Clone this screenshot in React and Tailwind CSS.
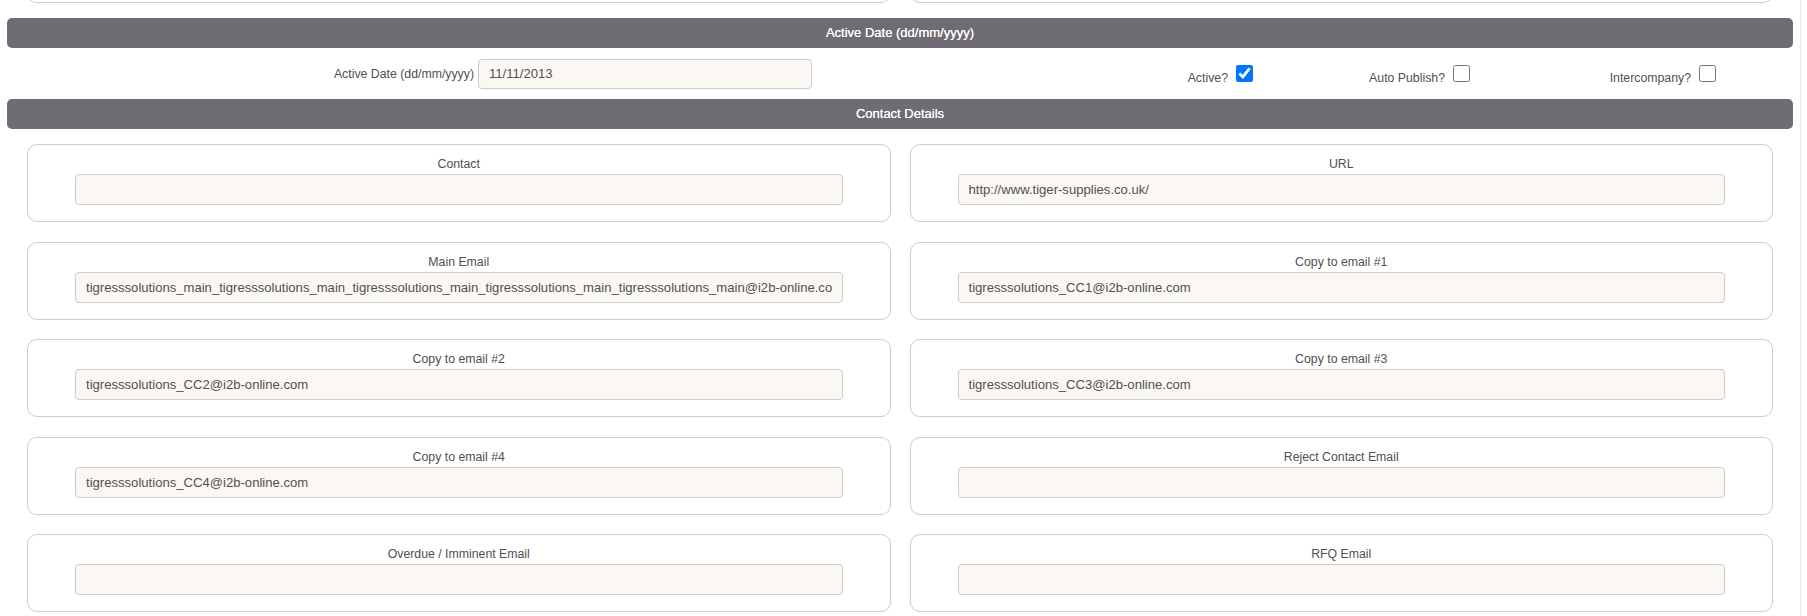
import React from 'react';

const contactFields = [
  { label: 'Contact', value: '' },
  { label: 'URL', value: 'http://www.tiger-supplies.co.uk/' },
  {
    label: 'Main Email',
    value:
      'tigresssolutions_main_tigresssolutions_main_tigresssolutions_main_tigresssolutions_main_tigresssolutions_main@i2b-online.com',
  },
  { label: 'Copy to email #1', value: 'tigresssolutions_CC1@i2b-online.com' },
  { label: 'Copy to email #2', value: 'tigresssolutions_CC2@i2b-online.com' },
  { label: 'Copy to email #3', value: 'tigresssolutions_CC3@i2b-online.com' },
  { label: 'Copy to email #4', value: 'tigresssolutions_CC4@i2b-online.com' },
  { label: 'Reject Contact Email', value: '' },
  { label: 'Overdue / Imminent Email', value: '' },
  { label: 'RFQ Email', value: '' },
];

const SectionBar = ({ title }) => (
  <div className="flex h-[30px] items-center justify-center rounded-[5px] bg-[#706c74] text-[13px] text-white [text-shadow:0_0_0.5px_#fff]">
    {title}
  </div>
);

const CheckField = ({ label, checked, width }) => (
  <div className={`flex items-center justify-end ${width}`}>
    <span className="pt-[8px] text-[12.3px] leading-[16px] text-[#505050]">{label}</span>
    <input
      type="checkbox"
      defaultChecked={checked}
      className="ml-[8px] h-[17px] w-[17px] accent-[#0075ff]"
    />
  </div>
);

const FieldCard = ({ label, value }) => (
  <div className="flex h-[78px] flex-col items-center rounded-[10px] border border-[#cccbd0] px-[47px] pt-[11px]">
    <div className="text-[12.3px] leading-[16px] text-[#505050]">{label}</div>
    <input
      type="text"
      readOnly
      value={value}
      className="mt-[2px] h-[31px] w-full rounded-[4px] border border-[#cccccc] bg-[#fbf8f3] px-[10px] text-[13.1px] text-[#505050] outline-none"
    />
  </div>
);

export default function App() {
  return (
    <div className="h-[616px] w-[1807px] overflow-hidden bg-white font-['Liberation_Sans',Arial,sans-serif]">
      <div className="h-full w-[1801px] border-r border-[#e8e8e8] px-[7px]">
        {/* cut-off cards from the section above */}
        <div className="h-[3px] overflow-hidden px-[20px]">
          <div className="-mt-[75px] grid grid-cols-2 gap-x-[19px]">
            <div className="h-[78px] rounded-[10px] border border-[#cccbd0]" />
            <div className="h-[78px] rounded-[10px] border border-[#cccbd0]" />
          </div>
        </div>

        <div className="mt-[15px]">
          <SectionBar title="Active Date (dd/mm/yyyy)" />
        </div>

        <div className="flex h-[51px] items-center">
          <div className="w-[467px] text-right text-[12.3px] leading-[16px] text-[#505050]">
            Active Date (dd/mm/yyyy)
          </div>
          <input
            type="text"
            readOnly
            value="11/11/2013"
            className="ml-[4px] h-[30px] w-[334px] rounded-[4px] border border-[#cccccc] bg-[#fbf8f3] px-[10px] text-[13.1px] text-[#505050] outline-none"
          />
          <CheckField label="Active?" checked width="w-[441px]" />
          <CheckField label="Auto Publish?" width="w-[217px]" />
          <CheckField label="Intercompany?" width="w-[246px]" />
        </div>

        <SectionBar title="Contact Details" />

        <div className="mt-[15px] grid grid-cols-2 gap-x-[19px] gap-y-[19.5px] px-[20px]">
          {contactFields.map((f) => (
            <FieldCard key={f.label} label={f.label} value={f.value} />
          ))}
        </div>
      </div>
    </div>
  );
}
